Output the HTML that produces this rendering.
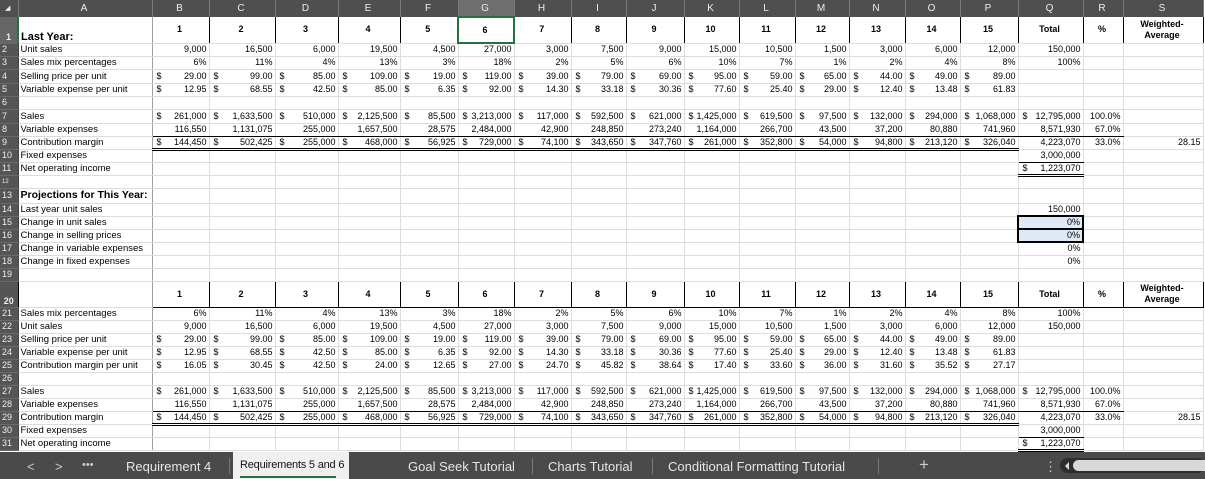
<!DOCTYPE html>
<html><head><meta charset="utf-8"><style>
*{margin:0;padding:0;box-sizing:border-box}
body{width:1205px;height:479px;overflow:hidden;background:#fff;font-family:"Liberation Sans",sans-serif;position:relative}
table{position:absolute;left:0;top:0;border-collapse:collapse;table-layout:fixed;width:1203px}
td{border-right:1px solid #dcdcdc;border-bottom:1px solid #dcdcdc;font-size:9px;text-align:right;padding:0 2px 0 0;white-space:nowrap;overflow:hidden;position:relative;height:13px;line-height:11px;color:#000}
td i{font-style:normal;position:absolute;left:4px}
tr.ch td{background:#4f4f4f;color:#eee;text-align:center;font-size:10px;height:17px;border-right:1px solid #7a7a7a;border-bottom:none}
tr.ch td.sel{background:#6e6e6e}
td.rh{background:#555;color:#eee;text-align:left;padding-left:2px;font-size:9px;border-right:1px solid #444;border-bottom:1px solid #6a6a6a}
td.a{text-align:left;padding-left:2px;font-size:9.5px;border-right:1px solid #a0a0a0}
tr.h td{height:26px;font-weight:bold;text-align:center;font-size:9px;border-right:1px solid #000;vertical-align:middle}
tr.h td.a{text-align:left;vertical-align:bottom;font-size:11px;border-right:1px solid #a0a0a0}
tr.h2 td{border-top:1px solid #000;border-bottom:1px solid #000}
tr.dd td{height:11px}
.u{border-bottom:1px solid #000!important}
.uu{border-bottom:3px double #000!important}
.b{font-weight:bold}
.bl{background:#dde9f5;border:2px solid #000!important}
.tabs{position:absolute;left:0;top:452px;width:1205px;height:27px;background:#4a4a4a;color:#e6e6e6;font-size:13px}
.tabs span{position:absolute;top:7px;white-space:nowrap}
.sep{position:absolute;top:6px;width:1px;height:16px;background:#777}
</style></head><body>
<table>
<colgroup><col style="width:18px"><col style="width:134px"><col style="width:57px"><col style="width:66px"><col style="width:63px"><col style="width:62px"><col style="width:58px"><col style="width:56px"><col style="width:57px"><col style="width:55px"><col style="width:58px"><col style="width:55px"><col style="width:56px"><col style="width:54px"><col style="width:56px"><col style="width:55px"><col style="width:58px"><col style="width:65px"><col style="width:40px"><col style="width:80px"></colgroup>
<tr class="ch"><td style="font-size:7px">◢</td><td>A</td><td>B</td><td>C</td><td>D</td><td>E</td><td>F</td><td class="sel">G</td><td>H</td><td>I</td><td>J</td><td>K</td><td>L</td><td>M</td><td>N</td><td>O</td><td>P</td><td>Q</td><td>R</td><td>S</td></tr>
<tr class="h"><td class="rh" style="vertical-align:bottom;background:#666;border-right:2px solid #217346">1</td><td class="a">Last Year:</td><td>1</td><td>2</td><td>3</td><td>4</td><td>5</td><td style="border:2px solid #217346">6</td><td>7</td><td>8</td><td>9</td><td>10</td><td>11</td><td>12</td><td>13</td><td>14</td><td>15</td><td>Total</td><td>%</td><td style="line-height:11px">Weighted-<br>Average</td></tr>
<tr><td class="rh">2</td><td class="a">Unit sales</td><td>9,000</td><td>16,500</td><td>6,000</td><td>19,500</td><td>4,500</td><td>27,000</td><td>3,000</td><td>7,500</td><td>9,000</td><td>15,000</td><td>10,500</td><td>1,500</td><td>3,000</td><td>6,000</td><td>12,000</td><td>150,000</td><td></td><td></td></tr>
<tr><td class="rh">3</td><td class="a">Sales mix percentages</td><td>6%</td><td>11%</td><td>4%</td><td>13%</td><td>3%</td><td>18%</td><td>2%</td><td>5%</td><td>6%</td><td>10%</td><td>7%</td><td>1%</td><td>2%</td><td>4%</td><td>8%</td><td>100%</td><td></td><td></td></tr>
<tr style="height:14px"><td class="rh">4</td><td class="a">Selling price per unit</td><td><i>$</i>29.00</td><td><i>$</i>99.00</td><td><i>$</i>85.00</td><td><i>$</i>109.00</td><td><i>$</i>19.00</td><td><i>$</i>119.00</td><td><i>$</i>39.00</td><td><i>$</i>79.00</td><td><i>$</i>69.00</td><td><i>$</i>95.00</td><td><i>$</i>59.00</td><td><i>$</i>65.00</td><td><i>$</i>44.00</td><td><i>$</i>49.00</td><td><i>$</i>89.00</td><td></td><td></td><td></td></tr>
<tr><td class="rh">5</td><td class="a">Variable expense per unit</td><td><i>$</i>12.95</td><td><i>$</i>68.55</td><td><i>$</i>42.50</td><td><i>$</i>85.00</td><td><i>$</i>6.35</td><td><i>$</i>92.00</td><td><i>$</i>14.30</td><td><i>$</i>33.18</td><td><i>$</i>30.36</td><td><i>$</i>77.60</td><td><i>$</i>25.40</td><td><i>$</i>29.00</td><td><i>$</i>12.40</td><td><i>$</i>13.48</td><td><i>$</i>61.83</td><td></td><td></td><td></td></tr>
<tr><td class="rh">6</td><td class="a"></td><td></td><td></td><td></td><td></td><td></td><td></td><td></td><td></td><td></td><td></td><td></td><td></td><td></td><td></td><td></td><td></td><td></td><td></td></tr>
<tr style="height:14px"><td class="rh">7</td><td class="a">Sales</td><td><i>$</i>261,000</td><td><i>$</i>1,633,500</td><td><i>$</i>510,000</td><td><i>$</i>2,125,500</td><td><i>$</i>85,500</td><td><i>$</i>3,213,000</td><td><i>$</i>117,000</td><td><i>$</i>592,500</td><td><i>$</i>621,000</td><td><i>$</i>1,425,000</td><td><i>$</i>619,500</td><td><i>$</i>97,500</td><td><i>$</i>132,000</td><td><i>$</i>294,000</td><td><i>$</i>1,068,000</td><td><i>$</i>12,795,000</td><td>100.0%</td><td></td></tr>
<tr><td class="rh">8</td><td class="a">Variable expenses</td><td class="u">116,550</td><td class="u">1,131,075</td><td class="u">255,000</td><td class="u">1,657,500</td><td class="u">28,575</td><td class="u">2,484,000</td><td class="u">42,900</td><td class="u">248,850</td><td class="u">273,240</td><td class="u">1,164,000</td><td class="u">266,700</td><td class="u">43,500</td><td class="u">37,200</td><td class="u">80,880</td><td class="u">741,960</td><td class="u">8,571,930</td><td class="u">67.0%</td><td></td></tr>
<tr class="dd"><td class="rh">9</td><td class="a">Contribution margin</td><td class="uu"><i>$</i>144,450</td><td class="uu"><i>$</i>502,425</td><td class="uu"><i>$</i>255,000</td><td class="uu"><i>$</i>468,000</td><td class="uu"><i>$</i>56,925</td><td class="uu"><i>$</i>729,000</td><td class="uu"><i>$</i>74,100</td><td class="uu"><i>$</i>343,650</td><td class="uu"><i>$</i>347,760</td><td class="uu"><i>$</i>261,000</td><td class="uu"><i>$</i>352,800</td><td class="uu"><i>$</i>54,000</td><td class="uu"><i>$</i>94,800</td><td class="uu"><i>$</i>213,120</td><td class="uu"><i>$</i>326,040</td><td>4,223,070</td><td>33.0%</td><td>28.15</td></tr>
<tr><td class="rh">10</td><td class="a">Fixed expenses</td><td></td><td></td><td></td><td></td><td></td><td></td><td></td><td></td><td></td><td></td><td></td><td></td><td></td><td></td><td></td><td class="u">3,000,000</td><td></td><td></td></tr>
<tr class="dd"><td class="rh">11</td><td class="a">Net operating income</td><td></td><td></td><td></td><td></td><td></td><td></td><td></td><td></td><td></td><td></td><td></td><td></td><td></td><td></td><td></td><td class="uu"><i>$</i>1,223,070</td><td></td><td></td></tr>
<tr style="height:11px"><td class="rh" style="height:11px;font-size:6px;line-height:6px">12</td><td class="a" style="height:11px"></td><td></td><td></td><td></td><td></td><td></td><td></td><td></td><td></td><td></td><td></td><td></td><td></td><td></td><td></td><td></td><td></td><td></td><td></td></tr>
<tr style="height:15px"><td class="rh">13</td><td class="a b" style="font-size:10.5px">Projections for This Year:</td><td></td><td></td><td></td><td></td><td></td><td></td><td></td><td></td><td></td><td></td><td></td><td></td><td></td><td></td><td></td><td></td><td></td><td></td></tr>
<tr><td class="rh">14</td><td class="a">Last year unit sales</td><td></td><td></td><td></td><td></td><td></td><td></td><td></td><td></td><td></td><td></td><td></td><td></td><td></td><td></td><td></td><td>150,000</td><td></td><td></td></tr>
<tr class="dd"><td class="rh">15</td><td class="a">Change in unit sales</td><td></td><td></td><td></td><td></td><td></td><td></td><td></td><td></td><td></td><td></td><td></td><td></td><td></td><td></td><td></td><td class="bl">0%</td><td></td><td></td></tr>
<tr class="dd"><td class="rh">16</td><td class="a">Change in selling prices</td><td></td><td></td><td></td><td></td><td></td><td></td><td></td><td></td><td></td><td></td><td></td><td></td><td></td><td></td><td></td><td class="bl">0%</td><td></td><td></td></tr>
<tr><td class="rh">17</td><td class="a">Change in variable expenses</td><td></td><td></td><td></td><td></td><td></td><td></td><td></td><td></td><td></td><td></td><td></td><td></td><td></td><td></td><td></td><td>0%</td><td></td><td></td></tr>
<tr><td class="rh">18</td><td class="a">Change in fixed expenses</td><td></td><td></td><td></td><td></td><td></td><td></td><td></td><td></td><td></td><td></td><td></td><td></td><td></td><td></td><td></td><td>0%</td><td></td><td></td></tr>
<tr><td class="rh">19</td><td class="a"></td><td></td><td></td><td></td><td></td><td></td><td></td><td></td><td></td><td></td><td></td><td></td><td></td><td></td><td></td><td></td><td></td><td></td><td></td></tr>
<tr class="h h2"><td class="rh" style="vertical-align:bottom;border-top:1px solid #6a6a6a;border-bottom:1px solid #6a6a6a">20</td><td class="a" style="border-top:1px solid #dcdcdc;border-bottom:1px solid #dcdcdc"></td><td>1</td><td>2</td><td>3</td><td>4</td><td>5</td><td>6</td><td>7</td><td>8</td><td>9</td><td>10</td><td>11</td><td>12</td><td>13</td><td>14</td><td>15</td><td>Total</td><td>%</td><td style="line-height:11px">Weighted-<br>Average</td></tr>
<tr><td class="rh">21</td><td class="a">Sales mix percentages</td><td>6%</td><td>11%</td><td>4%</td><td>13%</td><td>3%</td><td>18%</td><td>2%</td><td>5%</td><td>6%</td><td>10%</td><td>7%</td><td>1%</td><td>2%</td><td>4%</td><td>8%</td><td>100%</td><td></td><td></td></tr>
<tr><td class="rh">22</td><td class="a">Unit sales</td><td>9,000</td><td>16,500</td><td>6,000</td><td>19,500</td><td>4,500</td><td>27,000</td><td>3,000</td><td>7,500</td><td>9,000</td><td>15,000</td><td>10,500</td><td>1,500</td><td>3,000</td><td>6,000</td><td>12,000</td><td>150,000</td><td></td><td></td></tr>
<tr><td class="rh">23</td><td class="a">Selling price per unit</td><td><i>$</i>29.00</td><td><i>$</i>99.00</td><td><i>$</i>85.00</td><td><i>$</i>109.00</td><td><i>$</i>19.00</td><td><i>$</i>119.00</td><td><i>$</i>39.00</td><td><i>$</i>79.00</td><td><i>$</i>69.00</td><td><i>$</i>95.00</td><td><i>$</i>59.00</td><td><i>$</i>65.00</td><td><i>$</i>44.00</td><td><i>$</i>49.00</td><td><i>$</i>89.00</td><td></td><td></td><td></td></tr>
<tr><td class="rh">24</td><td class="a">Variable expense per unit</td><td><i>$</i>12.95</td><td><i>$</i>68.55</td><td><i>$</i>42.50</td><td><i>$</i>85.00</td><td><i>$</i>6.35</td><td><i>$</i>92.00</td><td><i>$</i>14.30</td><td><i>$</i>33.18</td><td><i>$</i>30.36</td><td><i>$</i>77.60</td><td><i>$</i>25.40</td><td><i>$</i>29.00</td><td><i>$</i>12.40</td><td><i>$</i>13.48</td><td><i>$</i>61.83</td><td></td><td></td><td></td></tr>
<tr><td class="rh">25</td><td class="a">Contribution margin per unit</td><td><i>$</i>16.05</td><td><i>$</i>30.45</td><td><i>$</i>42.50</td><td><i>$</i>24.00</td><td><i>$</i>12.65</td><td><i>$</i>27.00</td><td><i>$</i>24.70</td><td><i>$</i>45.82</td><td><i>$</i>38.64</td><td><i>$</i>17.40</td><td><i>$</i>33.60</td><td><i>$</i>36.00</td><td><i>$</i>31.60</td><td><i>$</i>35.52</td><td><i>$</i>27.17</td><td></td><td></td><td></td></tr>
<tr><td class="rh">26</td><td class="a"></td><td></td><td></td><td></td><td></td><td></td><td></td><td></td><td></td><td></td><td></td><td></td><td></td><td></td><td></td><td></td><td></td><td></td><td></td></tr>
<tr><td class="rh">27</td><td class="a">Sales</td><td><i>$</i>261,000</td><td><i>$</i>1,633,500</td><td><i>$</i>510,000</td><td><i>$</i>2,125,500</td><td><i>$</i>85,500</td><td><i>$</i>3,213,000</td><td><i>$</i>117,000</td><td><i>$</i>592,500</td><td><i>$</i>621,000</td><td><i>$</i>1,425,000</td><td><i>$</i>619,500</td><td><i>$</i>97,500</td><td><i>$</i>132,000</td><td><i>$</i>294,000</td><td><i>$</i>1,068,000</td><td><i>$</i>12,795,000</td><td>100.0%</td><td></td></tr>
<tr><td class="rh">28</td><td class="a">Variable expenses</td><td class="u">116,550</td><td class="u">1,131,075</td><td class="u">255,000</td><td class="u">1,657,500</td><td class="u">28,575</td><td class="u">2,484,000</td><td class="u">42,900</td><td class="u">248,850</td><td class="u">273,240</td><td class="u">1,164,000</td><td class="u">266,700</td><td class="u">43,500</td><td class="u">37,200</td><td class="u">80,880</td><td class="u">741,960</td><td class="u">8,571,930</td><td class="u">67.0%</td><td></td></tr>
<tr class="dd"><td class="rh">29</td><td class="a">Contribution margin</td><td class="uu"><i>$</i>144,450</td><td class="uu"><i>$</i>502,425</td><td class="uu"><i>$</i>255,000</td><td class="uu"><i>$</i>468,000</td><td class="uu"><i>$</i>56,925</td><td class="uu"><i>$</i>729,000</td><td class="uu"><i>$</i>74,100</td><td class="uu"><i>$</i>343,650</td><td class="uu"><i>$</i>347,760</td><td class="uu"><i>$</i>261,000</td><td class="uu"><i>$</i>352,800</td><td class="uu"><i>$</i>54,000</td><td class="uu"><i>$</i>94,800</td><td class="uu"><i>$</i>213,120</td><td class="uu"><i>$</i>326,040</td><td>4,223,070</td><td>33.0%</td><td>28.15</td></tr>
<tr><td class="rh">30</td><td class="a">Fixed expenses</td><td></td><td></td><td></td><td></td><td></td><td></td><td></td><td></td><td></td><td></td><td></td><td></td><td></td><td></td><td></td><td class="u">3,000,000</td><td></td><td></td></tr>
<tr class="dd"><td class="rh">31</td><td class="a">Net operating income</td><td></td><td></td><td></td><td></td><td></td><td></td><td></td><td></td><td></td><td></td><td></td><td></td><td></td><td></td><td></td><td class="uu"><i>$</i>1,223,070</td><td></td><td></td></tr>
</table>
<div class="tabs">
<span style="left:27px;color:#ccc">&lt;</span><span style="left:55px;color:#ccc">&gt;</span><span style="left:82px;font-size:11px;color:#ccc">•••</span>
<span style="left:126px">Requirement 4</span>
<div class="sep" style="left:229px"></div>
<div style="position:absolute;left:233px;top:0;width:116px;height:27px;background:#f0f0f0;"></div>
<span style="left:240px;color:#111;top:7px;font-size:11px;letter-spacing:-0.2px;z-index:2">Requirements 5 and 6</span>
<div style="position:absolute;left:240px;top:24px;width:96px;height:2px;background:#217346"></div>
<span style="left:408px">Goal Seek Tutorial</span>
<div class="sep" style="left:532px"></div>
<span style="left:548px">Charts Tutorial</span>
<div class="sep" style="left:652px"></div>
<span style="left:668px">Conditional Formatting Tutorial</span>
<div class="sep" style="left:878px"></div>
<span style="left:919px;font-size:17px;top:3px;color:#ccc">+</span>
<span style="left:1044px;color:#ccc">⋮</span>
<div style="position:absolute;left:1060px;top:6px;width:145px;height:15px;background:#2e2e2e;border-radius:8px"></div>
<div style="position:absolute;left:1065px;top:10px;width:0;height:0;border-top:4px solid transparent;border-bottom:4px solid transparent;border-right:4px solid #ddd"></div>
<div style="position:absolute;left:1073px;top:8px;width:132px;height:11px;background:#d8d8d8;border-radius:6px 0 0 6px"></div>
</div>
</body></html>
